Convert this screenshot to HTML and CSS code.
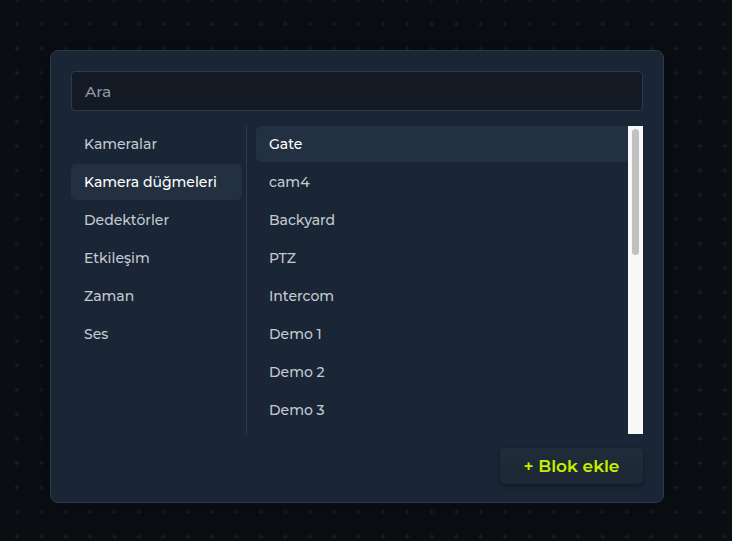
FILE: index.html
```html
<!DOCTYPE html>
<html lang="tr">
<head>
<meta charset="utf-8">
<link rel="stylesheet" href="styles.css">
</head>
<body>
<svg class="bg-grid" width="732" height="541" xmlns="http://www.w3.org/2000/svg" aria-hidden="true">
  <defs>
    <pattern id="cross" x="5" y="12" width="24.4" height="24.4" patternUnits="userSpaceOnUse">
      <rect x="9.5" y="11.5" width="5" height="1" fill="#19212b"/>
      <rect x="11.5" y="9.5" width="1" height="5" fill="#19212b"/>
    </pattern>
  </defs>
  <rect width="732" height="541" fill="url(#cross)"/>
</svg>
<div class="page">
  <div class="modal">
    <div class="search">Ara</div>
    <div class="content">
      <ul class="cats">
        <li class="cat">Kameralar</li>
        <li class="cat active">Kamera düğmeleri</li>
        <li class="cat">Dedektörler</li>
        <li class="cat">Etkileşim</li>
        <li class="cat">Zaman</li>
        <li class="cat">Ses</li>
      </ul>
      <div class="divider"></div>
      <ul class="items">
        <li class="item active">Gate</li>
        <li class="item">cam4</li>
        <li class="item">Backyard</li>
        <li class="item">PTZ</li>
        <li class="item">Intercom</li>
        <li class="item">Demo 1</li>
        <li class="item">Demo 2</li>
        <li class="item">Demo 3</li>
      </ul>
      <div class="scrollbar"><div class="thumb"></div></div>
    </div>
    <div class="footer">
      <button class="add">+ Blok ekle</button>
    </div>
  </div>
</div>
</body>
</html>
```
FILE: styles.css
```css
html, body {
  margin: 0;
  padding: 0;
}
body {
  width: 732px;
  height: 541px;
  overflow: hidden;
  background-color: #0a0e13;
  font-family: "Montserrat", "Inter", "Noto Sans", sans-serif;
  position: relative;
}
.bg-grid {
  position: absolute;
  left: 0;
  top: 0;
  z-index: 0;
}
.page {
  position: relative;
  z-index: 1;
  width: 732px;
  height: 541px;
  padding: 50px 0 0 50px;
  box-sizing: border-box;
}
.modal {
  width: 614px;
  height: 453px;
  box-sizing: border-box;
  background: #1a2535;
  border: 1px solid #2b3a4b;
  border-radius: 8px;
  padding: 20px 20px 17px 20px;
  display: flex;
  flex-direction: column;
  box-shadow: 0 0 30px rgba(0, 0, 0, 0.35);
}
.search {
  height: 40px;
  box-sizing: border-box;
  border: 1px solid #2c3b4b;
  border-radius: 4px;
  background: #131a23;
  color: #8d98a4;
  font-size: 15.5px;
  font-weight: 500;
  padding: 0 13px;
  display: flex;
  align-items: center;
}
.content {
  margin-top: 15px;
  height: 308px;
  display: flex;
}
.cats {
  list-style: none;
  margin: 0;
  padding: 0;
  width: 171px;
}
.cat {
  height: 36px;
  margin-bottom: 2px;
  border-radius: 5px;
  padding: 0 13px;
  display: flex;
  align-items: center;
  color: #c3cad1;
  font-size: 14px;
  font-weight: 500;
}
.cat.active {
  background: #223041;
  color: #ffffff;
}
.divider {
  width: 1px;
  background: #2c3a4a;
  margin-left: 4px;
  margin-right: 9px;
}
.items {
  list-style: none;
  margin: 0;
  padding: 0;
  flex: 1;
  overflow: hidden;
}
.scrollbar {
  width: 15px;
  background: #f8f8f8;
  padding: 3px 4px;
  box-sizing: border-box;
}
.thumb {
  height: 126px;
  width: 7px;
  border-radius: 4px;
  background: #c1c1c1;
}
.item {
  height: 36px;
  margin-bottom: 2px;
  border-radius: 5px 0 0 5px;
  padding: 0 13px;
  display: flex;
  align-items: center;
  color: #c3cad1;
  font-size: 14px;
  font-weight: 500;
}
.item.active {
  background: #223041;
  color: #ffffff;
}
.footer {
  margin-top: 14px;
  display: flex;
  justify-content: flex-end;
}
.add {
  width: 143px;
  height: 36px;
  border: none;
  border-radius: 5px;
  background: linear-gradient(#202c39, #1c2733);
  box-shadow: 0 2px 4px rgba(0, 0, 0, 0.35);
  color: #c6f000;
  font-family: "Montserrat", "Inter", "Noto Sans", sans-serif;
  font-size: 17px;
  font-weight: 600;
  padding: 0;
}
```
